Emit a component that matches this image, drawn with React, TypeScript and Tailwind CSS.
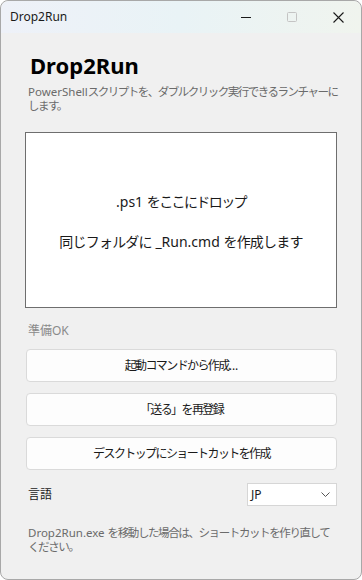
import React from "react";

const font = {
  fontFamily: '"Segoe UI", "Noto Sans", "Noto Sans CJK JP", sans-serif',
};

const buttons = [
  { jp: "起動コマンドから作成", tail: "..." },
  { jp: "「送る」を再登録", tail: "" },
  { jp: "デスクトップにショートカットを作成", tail: "" },
];

const TitleBar: React.FC = () => (
  <div className="h-8 flex items-center bg-gradient-to-r from-[#eef1f8] via-[#e9f3f6] to-[#f0f4ee] rounded-t-lg">
    <span className="pl-[9px] text-[12px] text-[#1a1a1a] flex-1">Drop2Run</span>
    <div className="flex items-center h-full">
      <div className="w-[46px] h-full flex items-center justify-center">
        <svg width="10" height="10" viewBox="0 0 10 10">
          <path d="M0 5.5h10" stroke="#1a1a1a" strokeWidth="1" />
        </svg>
      </div>
      <div className="w-[46px] h-full flex items-center justify-center">
        <svg width="10" height="10" viewBox="0 0 10 10">
          <rect x="0.5" y="0.5" width="9" height="9" rx="1" fill="none" stroke="#c4c4c4" strokeWidth="1" />
        </svg>
      </div>
      <div className="w-[46px] h-full flex items-center justify-center">
        <svg width="11" height="11" viewBox="0 0 11 11">
          <path d="M0.5 0.5l10 10M10.5 0.5l-10 10" stroke="#1a1a1a" strokeWidth="1.1" />
        </svg>
      </div>
    </div>
  </div>
);

export default function App() {
  return (
    <div className="w-[362px] h-[580px] bg-white" style={font}>
      <div className="w-[362px] h-[580px] flex flex-col rounded-lg border border-[#a8a8a8] overflow-hidden bg-[#f0f0f0]">
        <TitleBar />
        <div className="flex-1 flex flex-col pl-[24px] pr-[24px]">
          <h1 className="mt-[18px] ml-[5px] text-[22px] font-bold leading-[28px] text-black">
            Drop2Run
          </h1>
          <p className="mt-[6px] ml-[3px] text-[11.5px] leading-[14px] text-[#6b6b6b] whitespace-nowrap">
            PowerShell
            <span className="tracking-[-1.5px]">スクリプトを、ダブルクリック実行できるランチャーに</span>
            <br />
            <span className="tracking-[-1.5px]">します。</span>
          </p>

          <div className="mt-[19px] h-[176px] pt-[4px] border border-[#6e6e6e] bg-white flex flex-col items-center justify-center gap-[20px] text-[14px] leading-[20px] text-[#1a1a1a]">
            <span>
              .ps1 <span className="tracking-[-1.6px]">をここにドロップ</span>
            </span>
            <span>
              <span className="tracking-[-0.8px]">同じフォルダに</span> _Run.cmd{" "}
              <span className="tracking-[-0.8px]">を作成します</span>
            </span>
          </div>

          <p className="mt-[15px] ml-[3px] text-[12px] leading-[16px] text-[#8a8a8a]">準備OK</p>

          <div className="mt-[10px] flex flex-col gap-[11px] pl-px">
            {buttons.map((b) => (
              <div
                key={b.jp}
                className="h-[33px] rounded-[4px] border border-[#dadada] bg-[#fdfdfd] flex items-center justify-center text-[12px] text-[#1a1a1a]"
              >
                <span className="tracking-[-1.6px]">{b.jp}</span>
                {b.tail}
              </div>
            ))}
          </div>

          <div className="mt-[13px] flex items-center justify-between pl-[3px]">
            <span className="text-[12px] text-[#1a1a1a]">言語</span>
            <div className="w-[90px] h-[23px] border border-[#d6d6d6] bg-white flex items-center justify-between pl-[3px] pr-[6px] text-[12px] text-[#1a1a1a]">
              <span>JP</span>
              <svg width="9" height="6" viewBox="0 0 9 6">
                <path d="M0.5 0.5l4 4 4-4" fill="none" stroke="#555" strokeWidth="1" />
              </svg>
            </div>
          </div>

          <p className="mt-[20px] ml-[3px] text-[11.5px] leading-[14px] text-[#6b6b6b] whitespace-nowrap">
            Drop2Run.exe{" "}
            <span className="tracking-[-1.4px]">を移動した場合は、ショートカットを作り直して</span>
            <br />
            <span className="tracking-[-1.4px]">ください。</span>
          </p>
        </div>
      </div>
    </div>
  );
}
